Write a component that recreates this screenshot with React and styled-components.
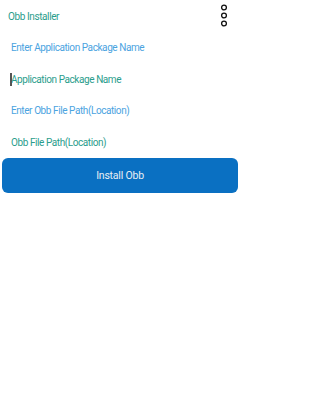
import React from 'react'
import styled, { createGlobalStyle } from 'styled-components'

const GlobalStyle = createGlobalStyle`
  html, body {
    margin: 0;
    padding: 0;
    background: #fff;
    font-family: Roboto, "Liberation Sans", sans-serif;
  }
`

function MoreIcon() {
  return (
    <svg width="8" height="24" viewBox="0 0 8 24">
      <circle cx="4" cy="3.5" r="2.4" fill="none" stroke="#111" strokeWidth="1.3" />
      <circle cx="4" cy="11.5" r="2.4" fill="none" stroke="#111" strokeWidth="1.3" />
      <circle cx="4" cy="19.5" r="2.4" fill="none" stroke="#111" strokeWidth="1.3" />
    </svg>
  )
}

function App() {
  return (
    <Screen>
      <GlobalStyle />
      <Header>
        <Title>Obb Installer</Title>
        <MenuButton>
          <MoreIcon />
        </MenuButton>
      </Header>
      <Row>
        <Label>Enter Application Package Name</Label>
      </Row>
      <Row>
        <Caret />
        <Value>Application Package Name</Value>
      </Row>
      <Row>
        <Label>Enter Obb File Path(Location)</Label>
      </Row>
      <Row>
        <Value>Obb File Path(Location)</Value>
      </Row>
      <InstallButton>Install Obb</InstallButton>
    </Screen>
  )
}

export default App

const Screen = styled.div`
  width: 240px;
  height: 400px;
  display: flex;
  flex-direction: column;
  background: #fff;
`

const Header = styled.div`
  height: 32px;
  display: flex;
  align-items: center;
  justify-content: space-between;
  padding: 0 12px 0 8px;
`

const Title = styled.span`
  font-size: 10px;
  color: #2a9d8c;
  letter-spacing: -0.4px;
`

const MenuButton = styled.div`
  display: flex;
  align-items: center;
`

const Row = styled.div`
  height: 31.5px;
  display: flex;
  align-items: center;
  padding-left: 11px;
  position: relative;
`

const Label = styled.span`
  font-size: 10px;
  color: #4ba3df;
  letter-spacing: -0.42px;
`

const Value = styled.span`
  font-size: 10px;
  color: #2a9d8c;
  letter-spacing: -0.42px;
`

const Caret = styled.span`
  position: absolute;
  left: 10px;
  top: 9px;
  width: 1.5px;
  height: 13px;
  background: #555;
`

const InstallButton = styled.button`
  margin: 0 2px;
  height: 35px;
  border: none;
  border-radius: 6px;
  background: #0a70c2;
  color: #e8eef4;
  font-family: Roboto, "Liberation Sans", sans-serif;
  font-size: 10.5px;
  letter-spacing: -0.2px;
`
